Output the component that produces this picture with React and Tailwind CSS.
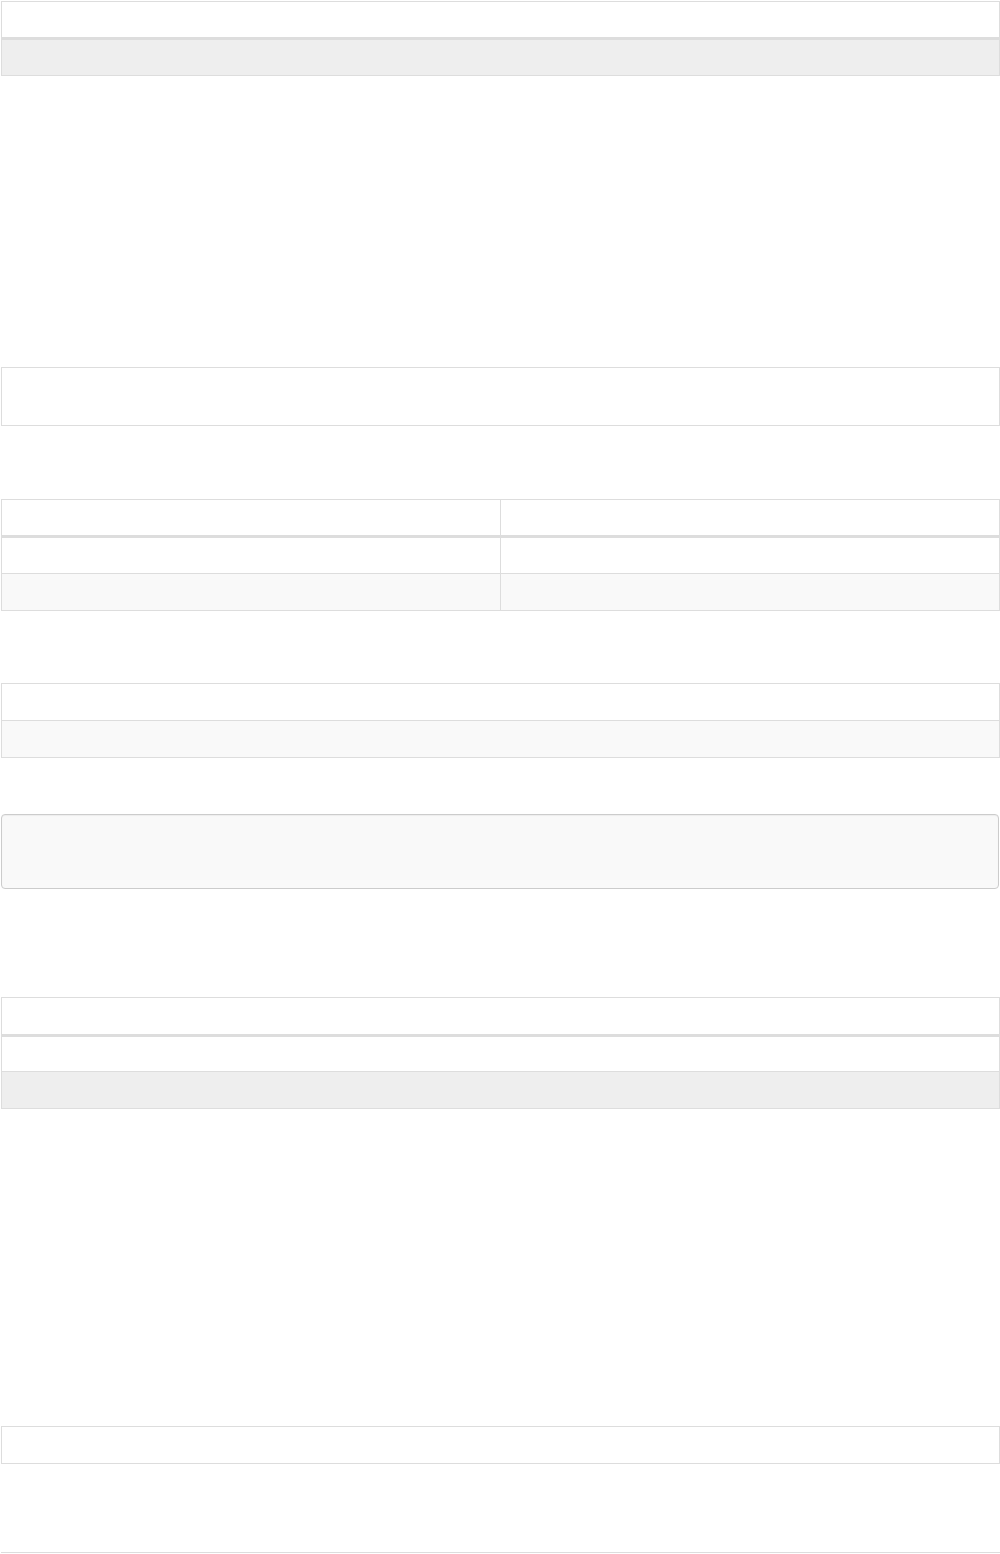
export default function App() {
  const b = "border-[#dddddd]";
  return (
    <div className="w-[1000px] bg-white pl-px pb-[40px]" style={{ fontFamily: '"Liberation Sans", Arial, sans-serif' }}>
      {/* Table 1 */}
      <div className={`mt-px w-[999px] border ${b}`}>
        <div className={`h-[38px] border-b-[3px] ${b} bg-white`} />
        <div className="h-[35px] bg-[#eeeeee]" />
      </div>

      {/* Box 2 */}
      <div className={`mt-[291px] h-[59px] w-[999px] border ${b} bg-white`} />

      {/* Table 3 */}
      <div className={`mt-[73px] w-[999px] border ${b}`}>
        <div className={`grid h-[38px] grid-cols-[499px_1fr] border-b-[3px] ${b}`}>
          <div className={`border-r ${b}`} />
          <div />
        </div>
        <div className={`grid h-[36px] grid-cols-[499px_1fr] border-b ${b} bg-white`}>
          <div className={`border-r ${b}`} />
          <div />
        </div>
        <div className="grid h-[36px] grid-cols-[499px_1fr] bg-[#f9f9f9]">
          <div className={`border-r ${b}`} />
          <div />
        </div>
      </div>

      {/* Table 4 */}
      <div className={`mt-[72px] w-[999px] border ${b}`}>
        <div className={`h-[37px] border-b ${b} bg-white`} />
        <div className="h-[36px] bg-[#f9f9f9]" />
      </div>

      {/* Well */}
      <div className="mt-[56px] h-[75px] w-[998px] rounded-[4px] border border-[#cccccc] bg-[#f9f9f9] shadow-[inset_0_1px_1px_rgba(0,0,0,0.05)]" />

      {/* Table 6 */}
      <div className={`mt-[108px] w-[999px] border ${b}`}>
        <div className={`h-[39px] border-b-[3px] ${b} bg-white`} />
        <div className={`h-[35px] border-b ${b} bg-white`} />
        <div className="h-[36px] bg-[#eeeeee]" />
      </div>

      {/* Box 7 */}
      <div className={`mt-[317px] h-[38px] w-[999px] border ${b} bg-white`} />

      {/* Bottom line */}
      <div className={`mt-[88px] h-[40px] w-[999px] border-t ${b}`} />
    </div>
  );
}
